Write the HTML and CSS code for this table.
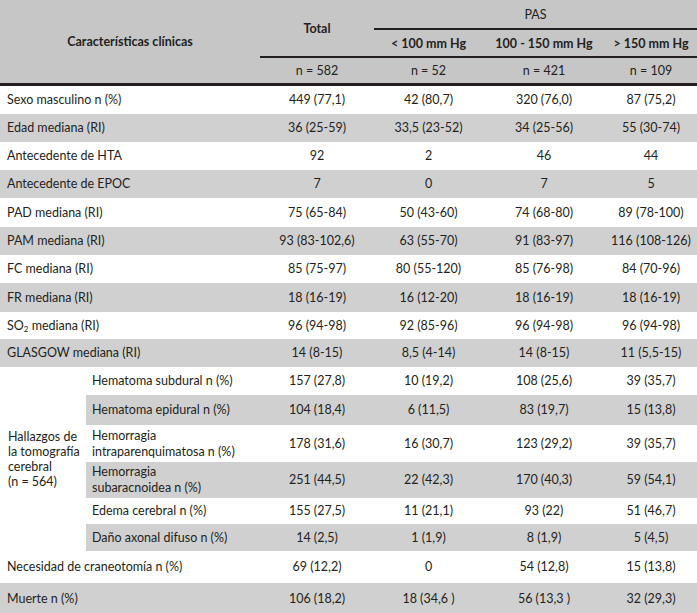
FILE: index.html
```html
<!DOCTYPE html>
<html lang="es">
<head>
<meta charset="utf-8">
<title>Características clínicas</title>
<link rel="stylesheet" href="styles.css">
</head>
<body>
<table class="tbl">
  <colgroup>
    <col class="c-a"><col class="c-b"><col class="c-total"><col class="c-lo"><col class="c-mid"><col class="c-hi">
  </colgroup>
  <thead>
    <tr class="h1">
      <th class="h-label" colspan="2" rowspan="3">Características clínicas</th>
      <th class="h-total" rowspan="2">Total</th>
      <th class="h-pas" colspan="3">PAS</th>
    </tr>
    <tr class="h2">
      <th class="h-sub">&lt; 100 mm Hg</th>
      <th class="h-sub">100 - 150 mm Hg</th>
      <th class="h-sub">&gt; 150 mm Hg</th>
    </tr>
    <tr class="h3">
      <th class="h-n">n = 582</th>
      <th class="h-n">n = 52</th>
      <th class="h-n">n = 421</th>
      <th class="h-n">n = 109</th>
    </tr>
  </thead>
  <tbody>
    <tr class="r28"><td class="lbl" colspan="2">Sexo masculino n (%)</td><td>449 (77,1)</td><td>42 (80,7)</td><td>320 (76,0)</td><td>87 (75,2)</td></tr>
    <tr class="r28 g"><td class="lbl" colspan="2">Edad mediana (RI)</td><td>36 (25-59)</td><td>33,5 (23-52)</td><td>34 (25-56)</td><td>55 (30-74)</td></tr>
    <tr class="r28"><td class="lbl" colspan="2">Antecedente de HTA</td><td>92</td><td>2</td><td>46</td><td>44</td></tr>
    <tr class="r28 g"><td class="lbl" colspan="2">Antecedente de EPOC</td><td>7</td><td>0</td><td>7</td><td>5</td></tr>
    <tr class="r29"><td class="lbl" colspan="2">PAD mediana (RI)</td><td>75 (65-84)</td><td>50 (43-60)</td><td>74 (68-80)</td><td>89 (78-100)</td></tr>
    <tr class="r28 g"><td class="lbl" colspan="2">PAM mediana (RI)</td><td>93 (83-102,6)</td><td>63 (55-70)</td><td>91 (83-97)</td><td>116 (108-126)</td></tr>
    <tr class="r28"><td class="lbl" colspan="2">FC mediana (RI)</td><td>85 (75-97)</td><td>80 (55-120)</td><td>85 (76-98)</td><td>84 (70-96)</td></tr>
    <tr class="r29 g"><td class="lbl" colspan="2">FR mediana (RI)</td><td>18 (16-19)</td><td>16 (12-20)</td><td>18 (16-19)</td><td>18 (16-19)</td></tr>
    <tr class="r27"><td class="lbl" colspan="2">SO<sub>2</sub> mediana (RI)</td><td>96 (94-98)</td><td>92 (85-96)</td><td>96 (94-98)</td><td>96 (94-98)</td></tr>
    <tr class="r28 g"><td class="lbl" colspan="2">GLASGOW mediana (RI)</td><td>14 (8-15)</td><td>8,5 (4-14)</td><td>14 (8-15)</td><td>11 (5,5-15)</td></tr>
    <tr class="r28">
      <td class="lbl group" rowspan="6">Hallazgos de la tomografía cerebral (n&nbsp;=&nbsp;564)</td>
      <td class="lbl sub">Hematoma subdural n (%)</td><td>157 (27,8)</td><td>10 (19,2)</td><td>108 (25,6)</td><td>39 (35,7)</td></tr>
    <tr class="r30 g"><td class="lbl sub">Hematoma epidural n (%)</td><td>104 (18,4)</td><td>6 (11,5)</td><td>83 (19,7)</td><td>15 (13,8)</td></tr>
    <tr class="r37"><td class="lbl sub">Hemorragia<br>intraparenquimatosa n (%)</td><td>178 (31,6)</td><td>16 (30,7)</td><td>123 (29,2)</td><td>39 (35,7)</td></tr>
    <tr class="r36 g"><td class="lbl sub">Hemorragia<br>subaracnoidea n (%)</td><td>251 (44,5)</td><td>22 (42,3)</td><td>170 (40,3)</td><td>59 (54,1)</td></tr>
    <tr class="r26"><td class="lbl sub">Edema cerebral n (%)</td><td>155 (27,5)</td><td>11 (21,1)</td><td>93 (22)</td><td>51 (46,7)</td></tr>
    <tr class="r27 g"><td class="lbl sub">Daño axonal difuso n (%)</td><td>14 (2,5)</td><td>1 (1,9)</td><td>8 (1,9)</td><td>5 (4,5)</td></tr>
    <tr class="r32"><td class="lbl" colspan="2">Necesidad de craneotomía n (%)</td><td>69 (12,2)</td><td>0</td><td>54 (12,8)</td><td>15 (13,8)</td></tr>
    <tr class="r31 g"><td class="lbl" colspan="2">Muerte n (%)</td><td>106 (18,2)</td><td>18 (34,6 )</td><td>56 (13,3 )</td><td>32 (29,3)</td></tr>
  </tbody>
</table>
</body>
</html>
```

FILE: styles.css
```css
html, body {
  margin: 0;
  padding: 0;
  background: #ffffff;
}

body {
  font-family: "Lato", "Open Sans", "Liberation Sans", sans-serif;
  font-size: 12.5px;
  color: #231f20;
}

.tbl {
  width: 697px;
  border-collapse: collapse;
  table-layout: fixed;
}

.c-a { width: 86px; }
.c-b { width: 174px; }
.c-total { width: 114px; }
.c-lo { width: 109px; }
.c-mid { width: 122px; }
.c-hi { width: 92px; }

thead th {
  background: #c6c6c6;
  padding: 0;
  font-weight: normal;
  text-align: center;
  vertical-align: middle;
}

.h1 th { height: 28px; }
.h2 th { height: 26px; }
.h3 th { height: 25px; }

.h-label {
  font-weight: 700;
  font-size: 12.5px;
  border-bottom: 3px solid #231f20;
}

.h-total {
  font-weight: 700;
  border-bottom: 2px solid #231f20;
}

.h-pas {
  border-bottom: 2px solid #231f20;
}

.h-sub {
  font-weight: 700;
  border-bottom: 2px solid #231f20;
}

.h-n {
  border-bottom: 3px solid #231f20;
}

tbody td {
  padding: 0;
  text-align: center;
  vertical-align: middle;
  line-height: 16px;
}

tbody tr.g td {
  background: #d0d0d0;
}

tbody td.lbl {
  text-align: left;
  padding-left: 7px;
}

tbody td.sub {
  padding-left: 6px;
}

tbody td.group {
  background: #ffffff;
  padding-left: 8px;
  padding-right: 4px;
  line-height: 15px;
}

sub {
  font-size: 8px;
  vertical-align: -2px;
  line-height: 0;
}

.r26 td { height: 26px; }
.r27 td { height: 27px; }
.r28 td { height: 28px; }
.r29 td { height: 29px; }
.r30 td { height: 30px; }
.r31 td { height: 31px; }
.r32 td { height: 32px; }
.r36 td { height: 36px; }
.r37 td { height: 37px; }
```
